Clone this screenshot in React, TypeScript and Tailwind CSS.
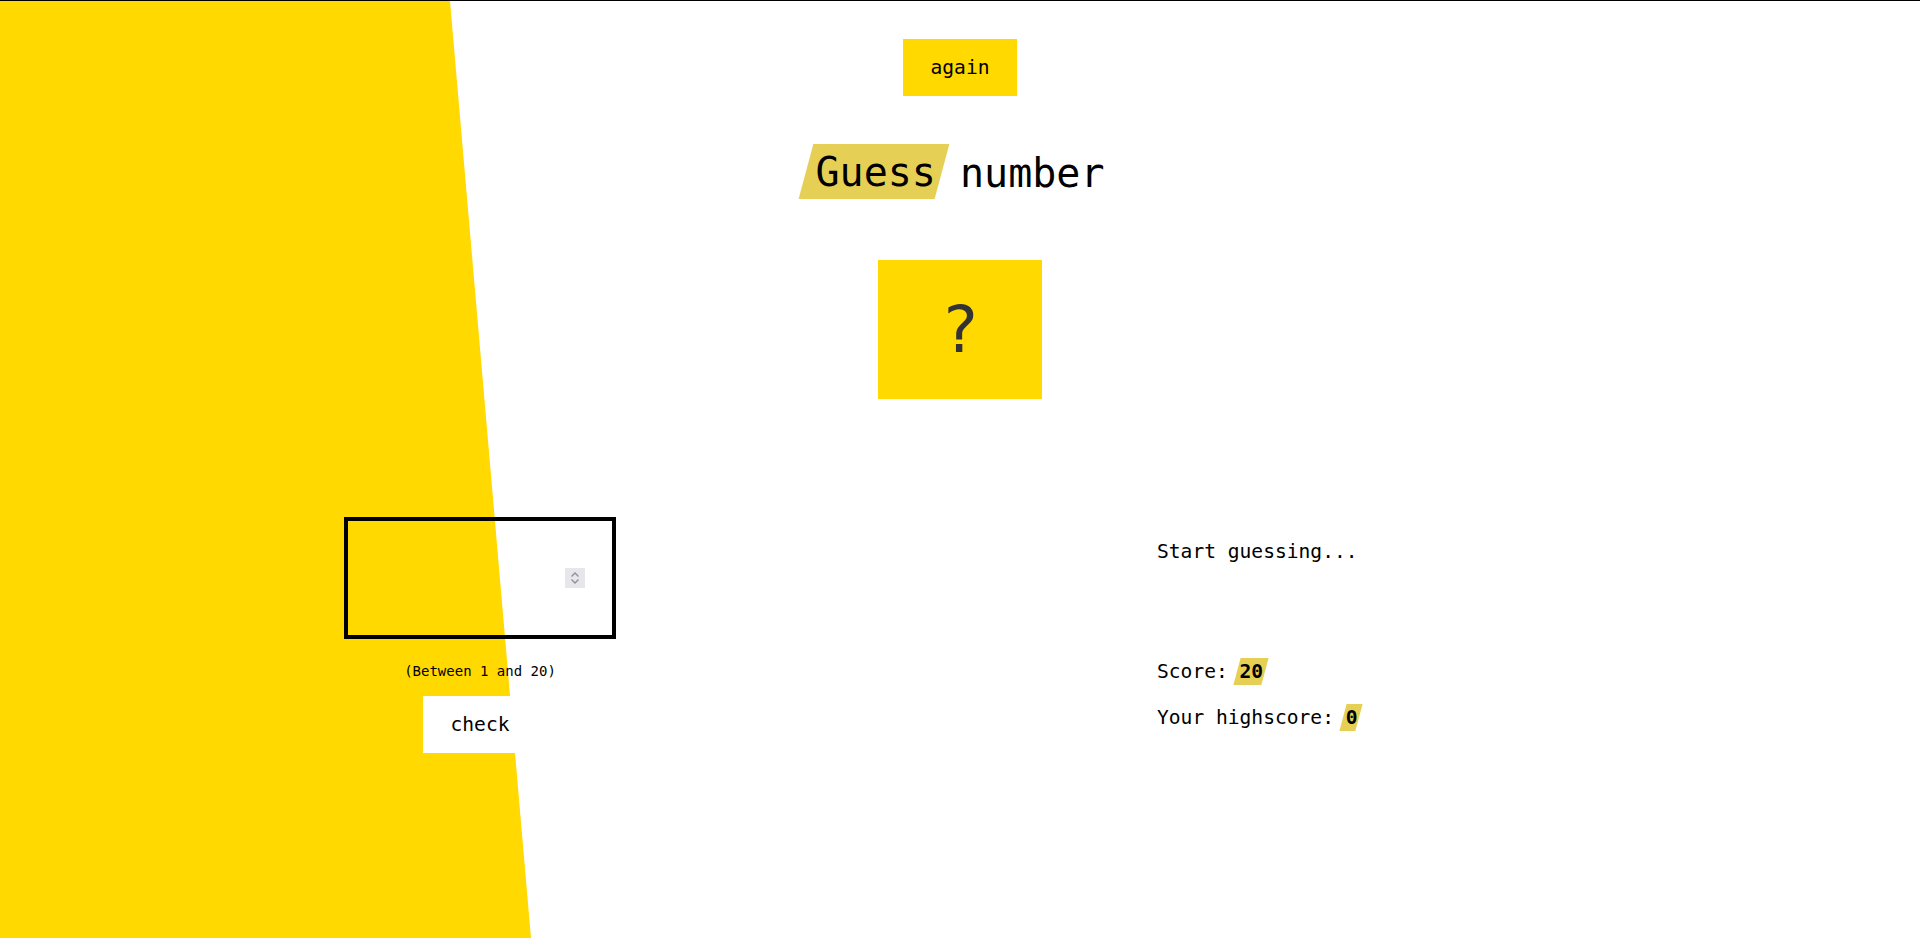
import React, { useState } from "react";

// skewed marker behind a word / number
const Marker = ({
  children,
  className,
}: {
  children: React.ReactNode;
  className: string;
}) => (
  <span className="relative inline-flex items-center">
    <span className={`absolute -skew-x-[15deg] bg-[#e5cf55] ${className}`} />
    <span className="relative">{children}</span>
  </span>
);

const Spinner = () => (
  <div className="absolute right-[27px] top-1/2 -translate-y-1/2 w-[20px] h-[20px] bg-[#e6e6eb] flex items-center justify-center pointer-events-none">
    <svg width="10" height="14" viewBox="0 0 10 14" fill="none">
      <path d="M1.5 5.5 L5 2 L8.5 5.5" stroke="#8e8e93" strokeWidth="1.3" />
      <path d="M1.5 8.5 L5 12 L8.5 8.5" stroke="#8e8e93" strokeWidth="1.3" />
    </svg>
  </div>
);

export default function App() {
  const [guess, setGuess] = useState("");
  const [score] = useState(20);
  const [highscore] = useState(0);
  const [message] = useState("Start guessing...");

  return (
    <div className="relative h-screen w-full overflow-hidden bg-white border-t border-black text-black font-['DejaVu_Sans_Mono','Liberation_Mono',monospace]">
      {/* yellow slanted background */}
      <div className="absolute inset-0 bg-[#ffd900] [clip-path:polygon(0_0,450px_0,531px_100%,0_100%)]" />

      <div className="relative flex flex-col">
        <header className="flex flex-col items-center pt-[38px]">
          <button className="w-[114px] h-[57px] bg-[#ffd900] text-[19.6px]">
            again
          </button>

          <h1 className="mt-[48px] h-[55px] flex items-stretch text-[40px] leading-none font-normal whitespace-pre">
            <Marker className="inset-y-0 -left-[10px] -right-[6px]">
              <span className="pt-[3px]">Guess</span>
            </Marker>
            <span className="flex items-center pt-[3px]"> number</span>
          </h1>

          <div className="mt-[61px] w-[164px] h-[139px] bg-[#ffd900] flex items-center justify-center text-[64px] leading-none text-[#333]">
            ?
          </div>
        </header>

        <main className="mt-[118px] grid grid-cols-2">
          <section className="flex flex-col items-center">
            <div className="relative w-[272px] h-[122px] border-4 border-black">
              <input
                type="number"
                value={guess}
                onChange={(e) => setGuess(e.target.value)}
                className="w-full h-full bg-transparent outline-none text-[40px] text-center [appearance:textfield] [&::-webkit-inner-spin-button]:appearance-none [&::-webkit-outer-spin-button]:appearance-none"
              />
              <Spinner />
            </div>
            <p className="mt-[22px] text-[14px] leading-[20px]">
              (Between 1 and 20)
            </p>
            <button className="mt-[15px] w-[114px] h-[57px] bg-white text-[19.6px]">
              check
            </button>
          </section>

          <section className="pl-[197px] pt-[21px] text-[19.6px] leading-[28px]">
            <p>{message}</p>
            <p className="mt-[92px] flex">
              Score:&nbsp;
              <Marker className="top-0 bottom-[1px] -left-[3px] -right-[1px]">
                <span className="font-bold">{score}</span>
              </Marker>
            </p>
            <p className="mt-[18px] flex">
              Your highscore:&nbsp;
              <Marker className="top-0 bottom-[1px] -left-[3px] -right-[1px]">
                <span className="font-bold">{highscore}</span>
              </Marker>
            </p>
          </section>
        </main>
      </div>
    </div>
  );
}
